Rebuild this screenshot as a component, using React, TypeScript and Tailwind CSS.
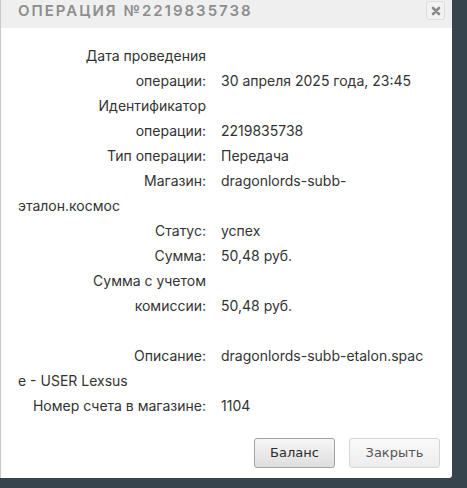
import React from 'react';

const rows: { label: React.ReactNode; value?: React.ReactNode }[] = [
  { label: <>Дата проведения<br />операции:</>, value: '30 апреля 2025 года, 23:45' },
  { label: <>Идентификатор<br />операции:</>, value: '2219835738' },
  { label: 'Тип операции:', value: 'Передача' },
  { label: 'Магазин:', value: <>dragonlords-subb-<br />эталон.космос</> },
  { label: 'Статус:', value: 'успех' },
  { label: 'Сумма:', value: '50,48 руб.' },
  { label: <>Сумма с учетом<br />комиссии:</>, value: '50,48 руб.' },
];

function Row({ label, value }: { label: React.ReactNode; value?: React.ReactNode }) {
  return (
    <div>
      <span className="inline-block w-[188px] text-right align-baseline">{label}</span>
      <span className="ml-[15px]">{value}</span>
    </div>
  );
}

export default function App() {
  return (
    <div className="min-h-[488px] bg-[#36454d]" style={{ fontFamily: 'Inter, "Noto Sans", sans-serif' }}>
      <div className="flex h-[478px] w-[452px] flex-col rounded-br-[3px] border-l border-[#c8c8c8] bg-white">
        <div className="flex h-[28px] items-start justify-between bg-[#efefef] pl-[17px] pr-[7px]">
          <h1 className="pt-[1px] text-[15px] font-semibold leading-[20px] tracking-[2px] text-[#8d8d8d]">
            ОПЕРАЦИЯ №2219835738
          </h1>
          <button className="mt-[1px] flex h-[19px] w-[19px] items-center justify-center rounded-[3px] border border-[#dcdcdc] bg-[#f2f2f2]">
            <svg width="10" height="10" viewBox="0 0 10 10">
              <path d="M2 2 L8 8 M8 2 L2 8" stroke="#8a8a8a" strokeWidth="2.6" strokeLinecap="round" />
            </svg>
          </button>
        </div>

        <div className="flex-1 px-[17px] pt-[15px] text-[14px] leading-[25px] text-[#333]">
          {rows.map((r, i) => (
            <Row key={i} label={r.label} value={r.value} />
          ))}
          <div className="h-[25px]" />
          <Row label="Описание:" value={<>dragonlords-subb-etalon.spac<br />e - USER Lexsus</>} />
          <Row label="Номер счета в магазине:" value="1104" />
        </div>

        <div
          className="flex justify-end gap-[14px] pb-[10px] pr-[12px] text-[13px]"
          style={{ fontFamily: '"DejaVu Sans", Verdana, sans-serif' }}
        >
          <button className="h-[30px] w-[81px] rounded-[3px] border border-[#a3a3a3] bg-gradient-to-b from-[#f6f6f6] to-[#dedede] text-[#2b2b2b]">
            Баланс
          </button>
          <button className="h-[30px] w-[91px] rounded-[3px] border border-[#d6d6d6] bg-gradient-to-b from-[#fafafa] to-[#ececec] text-[#555]">
            Закрыть
          </button>
        </div>
      </div>
    </div>
  );
}
